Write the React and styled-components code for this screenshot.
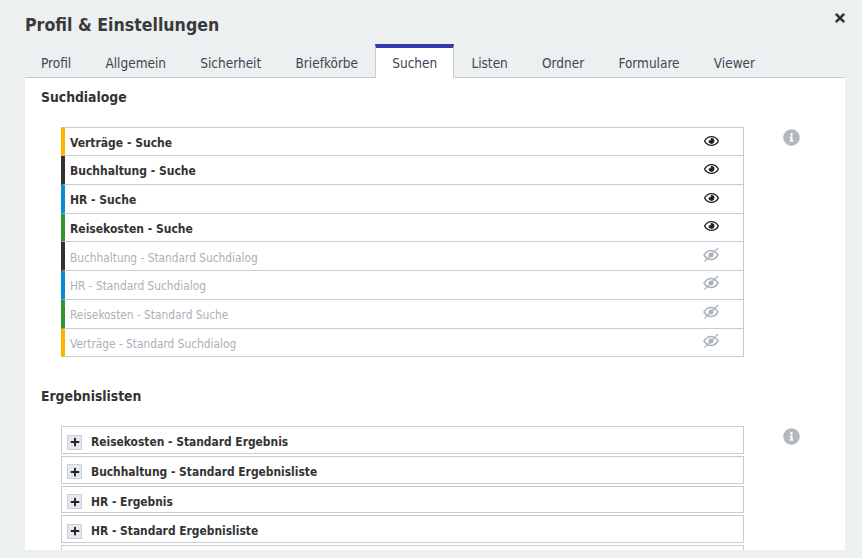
import styled, { createGlobalStyle } from "styled-components";
import { FaRegEye, FaInfoCircle, FaTimes, FaPlus } from "react-icons/fa";

const GlobalStyle = createGlobalStyle`
  html, body {
    margin: 0;
    height: 100%;
    overflow: hidden;
    background: #ecf0f1;
  }
  body {
    font-family: "DejaVu Sans", Verdana, sans-serif;
    font-stretch: condensed;
    color: #333;
  }
`;

const Dialog = styled.div`
  height: 558px;
  box-sizing: border-box;
  padding: 0 17px 8px 25px;
  display: flex;
  flex-direction: column;
`;

const Header = styled.div`
  height: 44px;
  display: flex;
  justify-content: space-between;
  padding-top: 14px;
  box-sizing: border-box;
`;

const Title = styled.h1`
  margin: 0;
  font-size: 17.6px;
  line-height: 22px;
  font-weight: 700;
  color: #3a3a3a;
`;

const Close = styled.button`
  border: 0;
  background: none;
  padding: 0;
  height: 14px;
  font-size: 14px;
  color: #333;
  display: flex;
  transform: translate(2px, -3px);
`;

const Tabs = styled.div`
  display: flex;
  height: 34px;
  border-bottom: 1px solid #c8ccd0;
  box-sizing: border-box;
`;

const Tab = styled.div`
  box-sizing: border-box;
  height: ${(p) => (p.$active ? "34px" : "33px")};
  padding: 0 ${(p) => (p.$active ? "16.1px" : "17.1px")} 0;
  font-size: 13.5px;
  line-height: ${(p) => (p.$active ? "31px" : "38px")};
  color: #3f4650;
  background: ${(p) => (p.$active ? "#fff" : "none")};
  border-top: ${(p) => (p.$active ? "4px solid #3238ad" : "0")};
  border-left: ${(p) => (p.$active ? "1px solid #c8ccd0" : "0")};
  border-right: ${(p) => (p.$active ? "1px solid #c8ccd0" : "0")};

  &:first-child {
    padding-left: 16px;
  }
`;

const Panel = styled.div`
  flex: 1;
  min-height: 0;
  overflow: hidden;
  background: #fff;
  padding: 10px 16px 0;
`;

const SectionTitle = styled.h2`
  margin: 0 0 21.3px;
  font-size: 13.8px;
  line-height: 18px;
  font-weight: 700;
  color: #333;
`;

const Section = styled.section`
  display: grid;
  grid-template-columns: 683px 1fr;
  padding-left: 20px;
  margin-bottom: 29.6px;
`;

const List = styled.div`
  display: flex;
  flex-direction: column;
`;

const SearchRow = styled.div`
  box-sizing: border-box;
  height: 28.76px;
  display: flex;
  align-items: center;
  justify-content: space-between;
  padding: 3px 24px 0 5px;
  border: 1px solid #c8ccd0;
  border-left: 4px solid ${(p) => p.$color};
  font-size: ${(p) => (p.$off ? "11.8px" : "12px")};
  font-weight: ${(p) => (p.$off ? 400 : 700)};
  color: ${(p) => (p.$off ? "#a9b1b9" : "#333")};

  & + & {
    border-top: 0;
  }
`;

const EyeIcon = styled.span`
  display: flex;
  font-size: 15px;
  color: ${(p) => (p.$off ? "#aab2ba" : "#222")};
  transform: translateY(${(p) => (p.$off ? "-3.5px" : "-2.5px")});
`;

const InfoIcon = styled.div`
  justify-self: end;
  margin: 2px 29px 0 0;
  font-size: 17px;
  color: #b2b9be;
  display: flex;
  height: 17px;
`;

const ResultRow = styled.div`
  box-sizing: border-box;
  height: 27.75px;
  margin-bottom: 2px;
  flex-shrink: 0;
  display: flex;
  align-items: center;
  gap: 9px;
  padding: 4px 5px 0;
  border: 1px solid #c8ccd0;
  font-size: 11.9px;
  font-weight: 700;
  color: #333;
`;

const Expander = styled.span`
  box-sizing: border-box;
  width: 15px;
  height: 15px;
  display: flex;
  align-items: center;
  justify-content: center;
  background: #e6eaee;
  border: 1px solid #ccd0d4;
  font-size: 10px;
  color: #222;
`;

// durchgestrichenes Auge, Strich von links unten nach rechts oben
const EyeSlash = () => (
  <svg width="16" height="16" viewBox="0 0 16 16" fill="none" stroke="currentColor">
    <path d="M1 8.5C3 5.5 5.500 4 8 4s5 1.500 7 4.500c-2 3-4.500 4.500-7 4.500s-5-1.500-7-4.500z" strokeWidth="1.500" />
    <circle cx="8" cy="8.500" r="2.500" fill="currentColor" stroke="none" />
    <path d="M1.500 15L15 1.500" strokeWidth="1.200" />
  </svg>
);

const tabs = ["Profil", "Allgemein", "Sicherheit", "Briefkörbe", "Suchen", "Listen", "Ordner", "Formulare", "Viewer"];

const searches = [
  { label: "Verträge - Suche", color: "#fdb300" },
  { label: "Buchhaltung - Suche", color: "#333333" },
  { label: "HR - Suche", color: "#0b8bd6" },
  { label: "Reisekosten - Suche", color: "#389130" },
  { label: "Buchhaltung - Standard Suchdialog", color: "#333333", off: true },
  { label: "HR - Standard Suchdialog", color: "#0b8bd6", off: true },
  { label: "Reisekosten - Standard Suche", color: "#389130", off: true },
  { label: "Verträge - Standard Suchdialog", color: "#fdb300", off: true },
];

const results = [
  "Reisekosten - Standard Ergebnis",
  "Buchhaltung - Standard Ergebnisliste",
  "HR - Ergebnis",
  "HR - Standard Ergebnisliste",
  "",
];

export default function App() {
  return (
    <>
      <GlobalStyle />
      <Dialog>
        <Header>
          <Title>Profil &amp; Einstellungen</Title>
          <Close aria-label="Schließen">
            <FaTimes />
          </Close>
        </Header>
        <Tabs>
          {tabs.map((t) => (
            <Tab key={t} $active={t === "Suchen"}>
              {t}
            </Tab>
          ))}
        </Tabs>
        <Panel>
          <SectionTitle>Suchdialoge</SectionTitle>
          <Section>
            <List>
              {searches.map((s) => (
                <SearchRow key={s.label} $color={s.color} $off={s.off}>
                  {s.label}
                  <EyeIcon $off={s.off}>{s.off ? <EyeSlash /> : <FaRegEye />}</EyeIcon>
                </SearchRow>
              ))}
            </List>
            <InfoIcon>
              <FaInfoCircle />
            </InfoIcon>
          </Section>
          <SectionTitle>Ergebnislisten</SectionTitle>
          <Section>
            <List>
              {results.map((r, i) => (
                <ResultRow key={i}>
                  <Expander>
                    <FaPlus />
                  </Expander>
                  {r}
                </ResultRow>
              ))}
            </List>
            <InfoIcon>
              <FaInfoCircle />
            </InfoIcon>
          </Section>
        </Panel>
      </Dialog>
    </>
  );
}
